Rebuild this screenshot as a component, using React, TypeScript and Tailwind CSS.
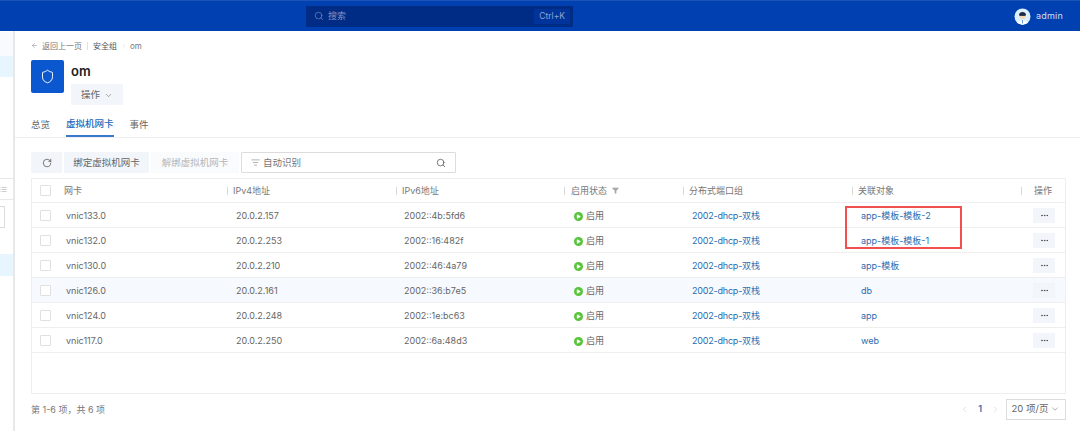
import { ChevronDown, ChevronLeft, ChevronRight, Ellipsis, RotateCw, Search, Shield, ArrowLeft, Filter, ListFilter, List, Play } from "lucide-react";

const rows = [
  { nic: "vnic133.0", v4: "20.0.2.157", v6: "2002::4b:5fd6", obj: "app-模板-模板-2" },
  { nic: "vnic132.0", v4: "20.0.2.253", v6: "2002::16:482f", obj: "app-模板-模板-1" },
  { nic: "vnic130.0", v4: "20.0.2.210", v6: "2002::46:4a79", obj: "app-模板" },
  { nic: "vnic126.0", v4: "20.0.2.161", v6: "2002::36:b7e5", obj: "db", hover: true },
  { nic: "vnic124.0", v4: "20.0.2.248", v6: "2002::1e:bc63", obj: "app" },
  { nic: "vnic117.0", v4: "20.0.2.250", v6: "2002::6a:48d3", obj: "web" },
];

function Check() {
  return <span className="block w-[11px] h-[11px] border border-[#e0e0e0] rounded-[1px] bg-white" />;
}

function Head({ w, label, gap, children }: { w: string; label: string; gap: string; children?: React.ReactNode }) {
  return (
    <div className={`${w} flex items-center shrink-0`}>
      <span className={`w-px h-[8px] bg-[#d9d9d9] ${gap}`} />
      <span>{label}</span>
      {children}
    </div>
  );
}

export default function App() {
  return (
    <div className="relative w-[1080px] h-[431px] overflow-hidden bg-white flex flex-col text-[#666] text-[9px] font-['Inter','Noto_Sans_CJK_SC',sans-serif]">
      <header className="h-[31px] shrink-0 bg-[#0040b0] border-t border-[#1a54b8] flex items-center relative">
        <div className="ml-[306px] w-[267px] h-[21px] bg-[#002c85] flex items-center pl-[8px] pr-[3px] text-[#7f93c4]">
          <Search size={10} strokeWidth={1.5} />
          <span className="ml-[4px] text-[9px]">搜索</span>
          <span className="ml-auto h-[15px] px-[5px] flex items-center bg-[#00349a] text-[8.5px] text-[#8ea4d4]">Ctrl+K</span>
        </div>
        <div className="ml-auto mr-[17px] flex items-center gap-[5px] text-[#d5def2]">
          <svg width="17" height="17" viewBox="0 0 17 17" className="block">
            <circle cx="8.5" cy="8.5" r="8" fill="#dcefff" />
            <path d="M3 15 C4 11.5 13 11.5 14 15 L8.5 17Z" fill="#ffffff" />
            <circle cx="8.5" cy="7.8" r="3.4" fill="#f6d7b8" />
            <path d="M5 7 C5 3 12 3 12 7 L5 7Z" fill="#1f2a44" />
            <rect x="5.4" y="6.6" width="6.2" height="1.3" fill="#1f2a44" />
            <rect x="8.2" y="12" width="0.8" height="3.5" fill="#4a8fd8" />
          </svg>
          <span className="text-[9px] tracking-[0.2px]">admin</span>
        </div>
      </header>

      <div className="flex-1 flex min-h-0">
        <aside className="w-[15px] shrink-0 border-r-2 border-[#e8e8e8] bg-white flex flex-col pt-[1px]">
          <div className="h-[24px] bg-[#f8fbfe]" />
          <div className="h-[21px] bg-[#e6f5fe]" />
          <div className="mt-[101px] h-[22px] border-y border-[#e8e8e8] flex items-center">
            <List size={7} strokeWidth={1.5} className="text-[#888]" />
          </div>
          <div className="mt-[6px] h-[22px] w-[5px] self-start border border-l-0 border-[#dcdcdc]" />
          <div className="mt-[26px] h-[22px] bg-[#e6f5fe]" />
        </aside>

        <main className="flex-1 min-w-0 pl-[16px] pr-[14px] flex flex-col">
          <nav className="h-[17px] mt-[6px] flex items-center text-[8px] text-[#777]">
            <ArrowLeft size={7} strokeWidth={1.5} className="mr-[4px]" />
            <span>返回上一页</span>
            <span className="w-px h-[8px] bg-[#e0e0e0] mx-[5px]" />
            <span className="text-[#555]">安全组</span>
            <ChevronRight size={6} strokeWidth={1.5} className="mx-[3.5px] text-[#bbb]" />
            <span>om</span>
          </nav>
          <section className="flex mt-[6px]">
            <div className="w-[33px] h-[33px] rounded-[2px] bg-[#0b57d0] flex items-center justify-center text-white">
              <Shield size={15} strokeWidth={1.5} />
            </div>
            <div className="ml-[7px]">
              <div className="h-[23px] flex items-center text-[13px] font-semibold text-[#222]">om</div>
              <div className="mt-[1px] w-[52px] h-[21px] pt-[1px] bg-[#f2f5fa] flex items-center justify-center gap-[4px] text-[9.5px]">
                <span>操作</span>
                <ChevronDown size={9} strokeWidth={1.5} />
              </div>
            </div>
          </section>
          <div className="-mr-[14px] -ml-[16px] pl-[16px] mt-[9px] h-[24px] border-b border-[#eee] flex items-stretch gap-[16px] text-[9.5px]">
            <span className="flex items-center">总览</span>
            <span className="flex items-center text-[#2468b8] border-b-2 border-[#3a78cc] font-medium">虚拟机网卡</span>
            <span className="flex items-center">事件</span>
          </div>

          <div className="mt-[14px] flex items-stretch h-[21px] text-[9.5px]">
            <div className="w-[31px] bg-[#f2f5fa] flex items-center justify-center"><RotateCw size={10} strokeWidth={1.5} className="text-[#333]" /></div>
            <div className="ml-[2px] w-[85px] pt-[1px] bg-[#f2f5fa] flex items-center justify-center">绑定虚拟机网卡</div>
            <div className="ml-[2px] w-[88px] pt-[1px] bg-[#fafbfd] flex items-center justify-center text-[#b5b5b5]">解绑虚拟机网卡</div>
            <div className="ml-[2px] w-[215px] border border-[#dcdcdc] rounded-[1px] flex items-center pl-[9px] pr-[9px] text-[#777]">
              <ListFilter size={9} strokeWidth={1.5} className="mr-[3px]" />
              <span className="pt-[1px]">自动识别</span>
              <Search size={10} strokeWidth={1.5} className="ml-auto text-[#333]" />
            </div>
          </div>

          <div className="mt-[5px] h-[216px] border border-[#eee] flex flex-col">
            <div className="h-[24px] border-b border-[#eee] flex items-center text-[9px] text-[#777] shrink-0">
              <div className="w-[32px] pl-[8px] shrink-0"><Check /></div>
              <div className="w-[163px] shrink-0">网卡</div>
              <Head w="w-[169px]" label="IPv4地址" gap="mr-[5px]" />
              <Head w="w-[168px]" label="IPv6地址" gap="mr-[5px]" />
              <Head w="w-[119px]" label="启用状态" gap="mr-[6px]">
                <Filter size={7} fill="#aaa" stroke="#aaa" className="ml-[5px]" />
              </Head>
              <Head w="w-[169px]" label="分布式端口组" gap="mr-[5px]" />
              <Head w="w-[169px]" label="关联对象" gap="mr-[5px]" />
              <Head w="w-[40px]" label="操作" gap="mr-[12px]" />
            </div>
            {rows.map((r) => (
              <div key={r.nic} className={`h-[25px] shrink-0 border-b border-[#eee] flex items-center ${r.hover ? "bg-[#f6f9fe]" : ""}`}>
                <div className="w-[32px] pl-[8px] shrink-0"><Check /></div>
                <div className="w-[168px] pl-[2px] pt-[2px] shrink-0">{r.nic}</div>
                <div className="w-[166px] shrink-0 pl-[4px] pt-[2px]">{r.v4}</div>
                <div className="w-[170px] shrink-0 pl-[6px] pt-[2px]">{r.v6}</div>
                <div className="w-[120px] shrink-0 pl-[6px] pt-[2px] flex items-center gap-[3px]">
                  <span className="w-[9px] h-[9px] rounded-full bg-[#58c43c] flex items-center justify-center">
                    <Play size={5} fill="#fff" stroke="#fff" />
                  </span>
                  <span>启用</span>
                </div>
                <div className="w-[168px] shrink-0 pl-[4px] pt-[2px] tracking-[-0.2px] text-[#2a6cb0]">2002-dhcp-双栈</div>
                <div className="w-[169px] shrink-0 pl-[5px] pt-[2px] text-[#2a6cb0]">{r.obj}</div>
                <div className="ml-[8px] w-[22px] h-[15px] bg-[#f2f5fa] flex items-center justify-center text-[#444]"><Ellipsis size={9} /></div>
              </div>
            ))}
          </div>

          <div className="h-[28px] mt-[1px] flex items-center">
            <span className="text-[9px] pt-[2px] text-[#777]">第 1-6 项，共 6 项</span>
            <div className="ml-auto flex items-center">
              <ChevronLeft size={9} strokeWidth={1.5} className="text-[#ccc]" />
              <span className="mx-[9px] text-[#2a6cb0] font-semibold">1</span>
              <ChevronRight size={9} strokeWidth={1.5} className="text-[#ccc]" />
              <div className="ml-[6px] w-[60px] h-[21px] border border-[#dcdcdc] flex items-center justify-center gap-[2px] text-[9.5px]">
                <span>20 项/页</span>
                <ChevronDown size={10} strokeWidth={1.2} />
              </div>
            </div>
          </div>
        </main>
      </div>

      <div className="absolute left-[845px] top-[206px] w-[117px] h-[43px] border-2 border-[#f05050] pointer-events-none" />
    </div>
  );
}
